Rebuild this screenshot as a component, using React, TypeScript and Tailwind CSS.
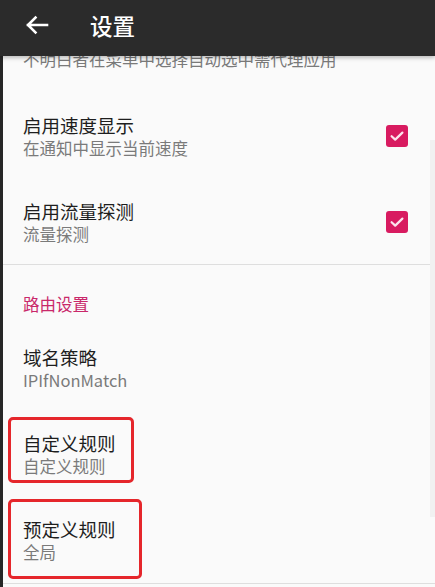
import React from "react";

const font = {
  fontFamily: '"Noto Sans CJK SC", "Noto Sans", Roboto, sans-serif',
};

function Check() {
  return (
    <div className="w-[22px] h-[22px] rounded-[3px] bg-[#d81b60] flex items-center justify-center shrink-0">
      <svg width="16" height="16" viewBox="0 0 16 16" fill="none">
        <path
          d="M2.6 8.2 L6.2 11.6 L13.4 4.6"
          stroke="#fce4ec"
          strokeWidth="2.2"
          strokeLinecap="round"
          strokeLinejoin="round"
        />
      </svg>
    </div>
  );
}

type ItemProps = {
  title?: string;
  summary: string;
  checked?: boolean;
  children?: React.ReactNode;
};

function Item({ title, summary, checked, children }: ItemProps) {
  return (
    <div className="relative flex items-center pl-[20px] pr-[27px] py-[20px]">
      <div className="flex-1 flex flex-col">
        {title && (
          <div className="text-[18.5px] leading-[24px] text-[#1e1e1e]">{title}</div>
        )}
        <div className="text-[16.5px] leading-[22px] text-[#7a7a7a]">{summary}</div>
      </div>
      {checked && <Check />}
      {children}
    </div>
  );
}

export default function App() {
  return (
    <div
      className="w-[435px] h-[587px] overflow-hidden flex flex-col bg-[#262626]"
      style={font}
    >
      <div className="h-[56px] shrink-0 bg-[#2b2b2b] flex items-center pb-[6px] relative z-10 shadow-[0_2px_4px_rgba(0,0,0,0.25)]">
        <svg width="24" height="20" viewBox="0 0 24 20" className="ml-[25px]" fill="none">
          <path
            d="M3 10 H22 M10.5 2.5 L3 10 L10.5 17.5"
            stroke="#ffffff"
            strokeWidth="2.6"
            strokeLinecap="square"
            strokeLinejoin="miter"
          />
        </svg>
        <div className="ml-[41px] text-[22.5px] leading-[28px] font-medium text-white">
          设置
        </div>
      </div>

      <div className="flex-1 ml-[3px] bg-[#fafafa] relative overflow-hidden">
        <div className="absolute right-0 top-[84px] w-[5px] h-[377px] bg-[#f1f1f1]" />
        <div className="flex flex-col -mt-[8px]">
          <div className="pl-[20px] text-[16.5px] leading-[22px] text-[#7a7a7a]">
            不明白者在菜单中选择自动选中需代理应用
          </div>
          <div className="h-[23px]" />
          <Item title="启用速度显示" summary="在通知中显示当前速度" checked />
          <Item title="启用流量探测" summary="流量探测" checked />
          <div className="h-px bg-[#dedede] -mt-px" />
          <div className="pl-[20px] pt-[28px] pb-[10px] text-[16.5px] leading-[22px] text-[#c9286a]">
            路由设置
          </div>
          <Item title="域名策略" summary="IPIfNonMatch" />
          <Item title="自定义规则" summary="自定义规则">
            <div className="absolute left-[5px] top-[6px] w-[126px] h-[66px] border-[3px] border-[#e5262b] rounded-[5px]" />
          </Item>
          <Item title="预定义规则" summary="全局">
            <div className="absolute left-[5px] top-[2px] w-[134px] h-[80px] border-[3px] border-[#e5262b] rounded-[5px]" />
          </Item>
          <div className="h-px bg-[#dedede]" />
        </div>
      </div>
    </div>
  );
}
